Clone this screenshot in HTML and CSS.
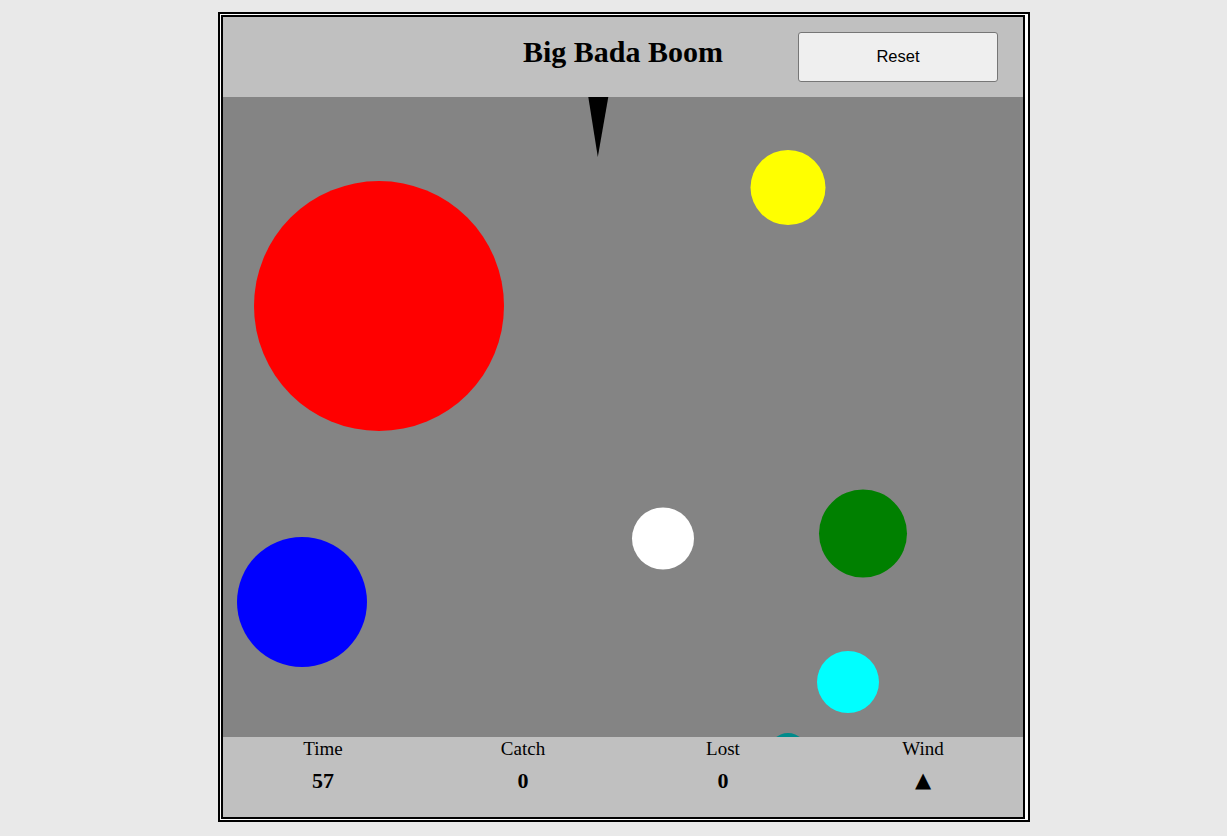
FILE: index.html
```html
<!DOCTYPE html>
<html lang="en">
<head>
<meta charset="utf-8">
<title>Big Bada Boom</title>
<link rel="stylesheet" href="styles.css">
</head>
<body>
<div class="frame">
  <div class="game">
    <header class="topbar">
      <h1 class="title">Big Bada Boom</h1>
      <button class="reset" type="button">Reset</button>
    </header>
    <div class="field">
      <svg class="field-svg" width="800" height="640" viewBox="0 0 800 640">
        <polygon points="365.3,0 385.3,0 374.8,60" fill="#000"/>
        <circle cx="156" cy="209" r="125" fill="#ff0000"/>
        <circle cx="565" cy="90.5" r="37.5" fill="#ffff00"/>
        <circle cx="440" cy="441.5" r="31" fill="#ffffff"/>
        <circle cx="640" cy="436.5" r="44" fill="#008000"/>
        <circle cx="79" cy="505" r="65" fill="#0000ff"/>
        <circle cx="625" cy="585" r="31" fill="#00ffff"/>
        <circle cx="565" cy="655" r="19" fill="#008b8b"/>
      </svg>
    </div>
    <footer class="stats">
      <div class="stat"><span class="stat-label">Time</span><span class="stat-value">57</span></div>
      <div class="stat"><span class="stat-label">Catch</span><span class="stat-value">0</span></div>
      <div class="stat"><span class="stat-label">Lost</span><span class="stat-value">0</span></div>
      <div class="stat"><span class="stat-label">Wind</span><span class="stat-value stat-arrow">&#9650;</span></div>
    </footer>
  </div>
</div>
</body>
</html>
```

FILE: styles.css
```css
html, body {
  margin: 0;
  padding: 0;
}

body {
  background: #e9e9e9;
  font-family: "Liberation Serif", "Times New Roman", serif;
  color: #000;
  padding-top: 12px;
}

.frame {
  width: 806px;
  margin-left: 218px;
  border: 2px solid #000;
  padding: 1px;
  background: #fff;
}

.game {
  width: 800px;
  border: 2px solid #000;
  background: #c0c0c0;
}

.topbar {
  height: 80px;
  display: grid;
  grid-template-columns: 1fr auto 1fr;
  align-items: center;
}

.title {
  grid-column: 2;
  align-self: start;
  margin: 18px 0 0;
  font-size: 30px;
  font-weight: bold;
  line-height: 34px;
  white-space: nowrap;
}

.reset {
  grid-column: 3;
  justify-self: end;
  margin-right: 25px;
  margin-bottom: 1px;
  width: 200px;
  height: 50px;
  background: #efefef;
  border: 1px solid #767676;
  border-radius: 3px;
  font-family: "Liberation Sans", Arial, sans-serif;
  font-size: 16.5px;
  color: #000;
  padding: 0 0 1px;
}

.field {
  height: 640px;
  background: #848484;
  overflow: hidden;
}

.field-svg {
  display: block;
}

.stats {
  height: 80px;
  display: grid;
  grid-template-columns: repeat(4, 1fr);
}

.stat {
  display: flex;
  flex-direction: column;
  align-items: center;
  padding-top: 1px;
}

.stat-label {
  font-size: 19px;
  line-height: 21px;
}

.stat-value {
  margin-top: 9px;
  font-size: 22px;
  font-weight: bold;
  line-height: 25px;
}

.stat-arrow {
  font-family: "DejaVu Sans", sans-serif;
  font-size: 21px;
  font-weight: normal;
}
```
